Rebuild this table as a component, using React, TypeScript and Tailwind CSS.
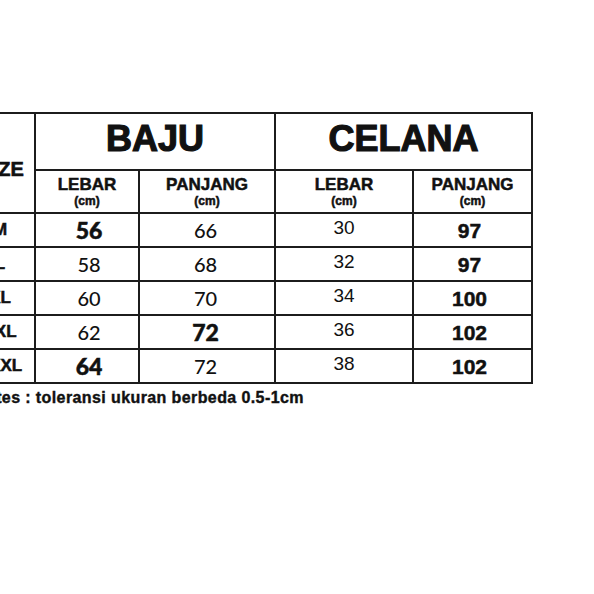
import React from 'react'

type Row = {
  size: string
  bajuLebar: string
  bajuLebarBold: boolean
  bajuPanjang: string
  bajuPanjangBold: boolean
  celanaLebar: string
  celanaPanjang: string
}

const rows: Row[] = [
  { size: 'M', bajuLebar: '56', bajuLebarBold: true, bajuPanjang: '66', bajuPanjangBold: false, celanaLebar: '30', celanaPanjang: '97' },
  { size: 'L', bajuLebar: '58', bajuLebarBold: false, bajuPanjang: '68', bajuPanjangBold: false, celanaLebar: '32', celanaPanjang: '97' },
  { size: 'XL', bajuLebar: '60', bajuLebarBold: false, bajuPanjang: '70', bajuPanjangBold: false, celanaLebar: '34', celanaPanjang: '100' },
  { size: 'XXL', bajuLebar: '62', bajuLebarBold: false, bajuPanjang: '72', bajuPanjangBold: true, celanaLebar: '36', celanaPanjang: '102' },
  { size: 'XXXL', bajuLebar: '64', bajuLebarBold: true, bajuPanjang: '72', bajuPanjangBold: false, celanaLebar: '38', celanaPanjang: '102' },
]

const cell = 'border-2 border-[#1c1c1c] text-center align-middle p-0'

function SubHead({ label }: { label: string }) {
  return (
    <th className={cell}>
      <div className="flex flex-col items-center leading-none [-webkit-text-stroke:0.5px_#111]">
        <span className="text-[17px] font-bold">{label}</span>
        <span className="mt-[2px] text-[12px] font-bold">(cm)</span>
      </div>
    </th>
  )
}

export default function App() {
  return (
    <div
      className="relative h-[594px] w-[594px] overflow-hidden bg-white text-[#111]"
      style={{ fontFamily: '"Liberation Sans", Arial, sans-serif' }}
    >
      <div className="ml-[-36px] pt-[112px]">
        <table className="table-fixed border-collapse">
          <colgroup>
            <col className="w-[70px]" />
            <col className="w-[104px]" />
            <col className="w-[136px]" />
            <col className="w-[138px]" />
            <col className="w-[119px]" />
          </colgroup>
          <thead>
            <tr className="h-[57px]">
              <th rowSpan={2} className={`${cell} pt-[12px] pl-[3px] text-[20px] font-bold [-webkit-text-stroke:0.6px_#111]`}>
                SIZE
              </th>
              <th colSpan={2} className={`${cell} pb-[6px] text-[36px] font-bold leading-none [-webkit-text-stroke:1.2px_#111]`}>
                BAJU
              </th>
              <th colSpan={2} className={`${cell} pb-[6px] text-[36px] font-bold leading-none [-webkit-text-stroke:1.2px_#111]`}>
                CELANA
              </th>
            </tr>
            <tr className="h-[43px]">
              <SubHead label="LEBAR" />
              <SubHead label="PANJANG" />
              <SubHead label="LEBAR" />
              <SubHead label="PANJANG" />
            </tr>
          </thead>
          <tbody>
            {rows.map((r, i) => (
              <tr key={i} className="h-[34px]">
                <td className={`${cell} text-[17px] font-bold [-webkit-text-stroke:0.5px_#111]`}>{r.size}</td>
                <td
                  className={`${cell} pl-[4px] leading-none ${r.bajuLebarBold ? 'text-[23px] font-black [-webkit-text-stroke:0.5px_#111]' : 'text-[20px] font-medium'}`}
                  style={{ fontFamily: 'Lato, "Noto Sans", sans-serif' }}
                >
                  {r.bajuLebar}
                </td>
                <td
                  className={`${cell} pr-[3px] leading-none ${r.bajuPanjangBold ? 'text-[23px] font-black [-webkit-text-stroke:0.5px_#111]' : 'text-[20px] font-medium'}`}
                  style={{ fontFamily: 'Lato, "Noto Sans", sans-serif' }}
                >
                  {r.bajuPanjang}
                </td>
                <td className={`${cell} pb-[5px] text-[19px] font-normal leading-none`}>{r.celanaLebar}</td>
                <td className={`${cell} pr-[6px] text-[21px] font-bold leading-none [-webkit-text-stroke:0.5px_#111]`}>
                  {r.celanaPanjang}
                </td>
              </tr>
            ))}
          </tbody>
        </table>
        <p className="ml-[10px] mt-[6px] text-[16px] font-bold leading-none tracking-[0.4px] [-webkit-text-stroke:0.4px_#111]">
          Notes : toleransi ukuran berbeda 0.5-1cm
        </p>
      </div>
    </div>
  )
}
